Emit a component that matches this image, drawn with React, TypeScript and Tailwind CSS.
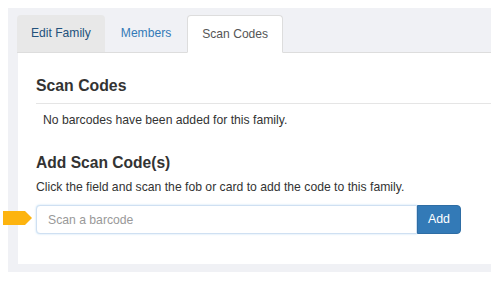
import React from 'react';

const font = { fontFamily: '"Liberation Sans", Arial, sans-serif' };

function Tab({ label, active, tone }: { label: string; active?: boolean; tone?: string }) {
  if (active) {
    return (
      <div className="mr-[2px] -mb-px flex h-[38px] items-center rounded-t-[4px] border border-[#dddddd] border-b-transparent bg-white px-[14px] text-[12.1px] text-[#555555]">
        {label}
      </div>
    );
  }
  return (
    <div className={`mr-[2px] flex h-[37px] items-center rounded-t-[4px] px-[14px] text-[12.1px] ${tone}`}>
      {label}
    </div>
  );
}

export default function App() {
  return (
    <div style={font} className="relative h-[281px] w-[500px] overflow-hidden bg-white pl-2 pt-2 text-[#333333]">
      <div className="flex h-[264px] w-[483px] flex-col bg-[#f0f1f5] pb-2 pl-[9px] pt-[7px]">
        <div className="flex h-[38px] items-end border-b border-[#dddddd]">
          <Tab label="Edit Family" tone="bg-[#e8e8e8] text-[#23527c]" />
          <Tab label="Members" tone="text-[#337ab7]" />
          <Tab label="Scan Codes" active />
        </div>
        <div className="ml-px flex-1 bg-white pl-[18px] pt-[23px]">
          <h3 className="text-[15.8px] font-bold leading-[20px] text-[#333333]">Scan Codes</h3>
          <div className="mt-[7px] border-t border-[#e5e5e5]" />
          <p className="mt-[8px] pl-[7px] text-[12.2px] leading-[17px]">No barcodes have been added for this family.</p>
          <h3 className="mt-[24px] text-[15.6px] font-bold leading-[20px]">Add Scan Code(s)</h3>
          <p className="mt-[6px] text-[12.2px] leading-[17px]">
            Click the field and scan the fob or card to add the code to this family.
          </p>
          <div className="mt-[9px] flex h-[29px] w-[425px]">
            <input
              placeholder="Scan a barcode"
              className="h-full flex-1 rounded-l-[4px] border border-[#cfe0f2] bg-white px-[11px] text-[12.2px] text-[#555555] shadow-[0_0_2px_rgba(102,175,233,0.45)] outline-none placeholder:text-[#999999]"
              style={font}
            />
            <button
              className="h-full w-[44px] rounded-r-[4px] border border-[#2e6da4] bg-[#337ab7] text-[12.4px] text-white"
              style={font}
            >
              Add
            </button>
          </div>
        </div>
      </div>
      <svg className="absolute left-[3px] top-[211px]" width="30" height="14" viewBox="0 0 30 14">
        <polygon points="0,0 22,0 29,7 22,14 0,14" fill="#fdb40f" />
      </svg>
    </div>
  );
}
